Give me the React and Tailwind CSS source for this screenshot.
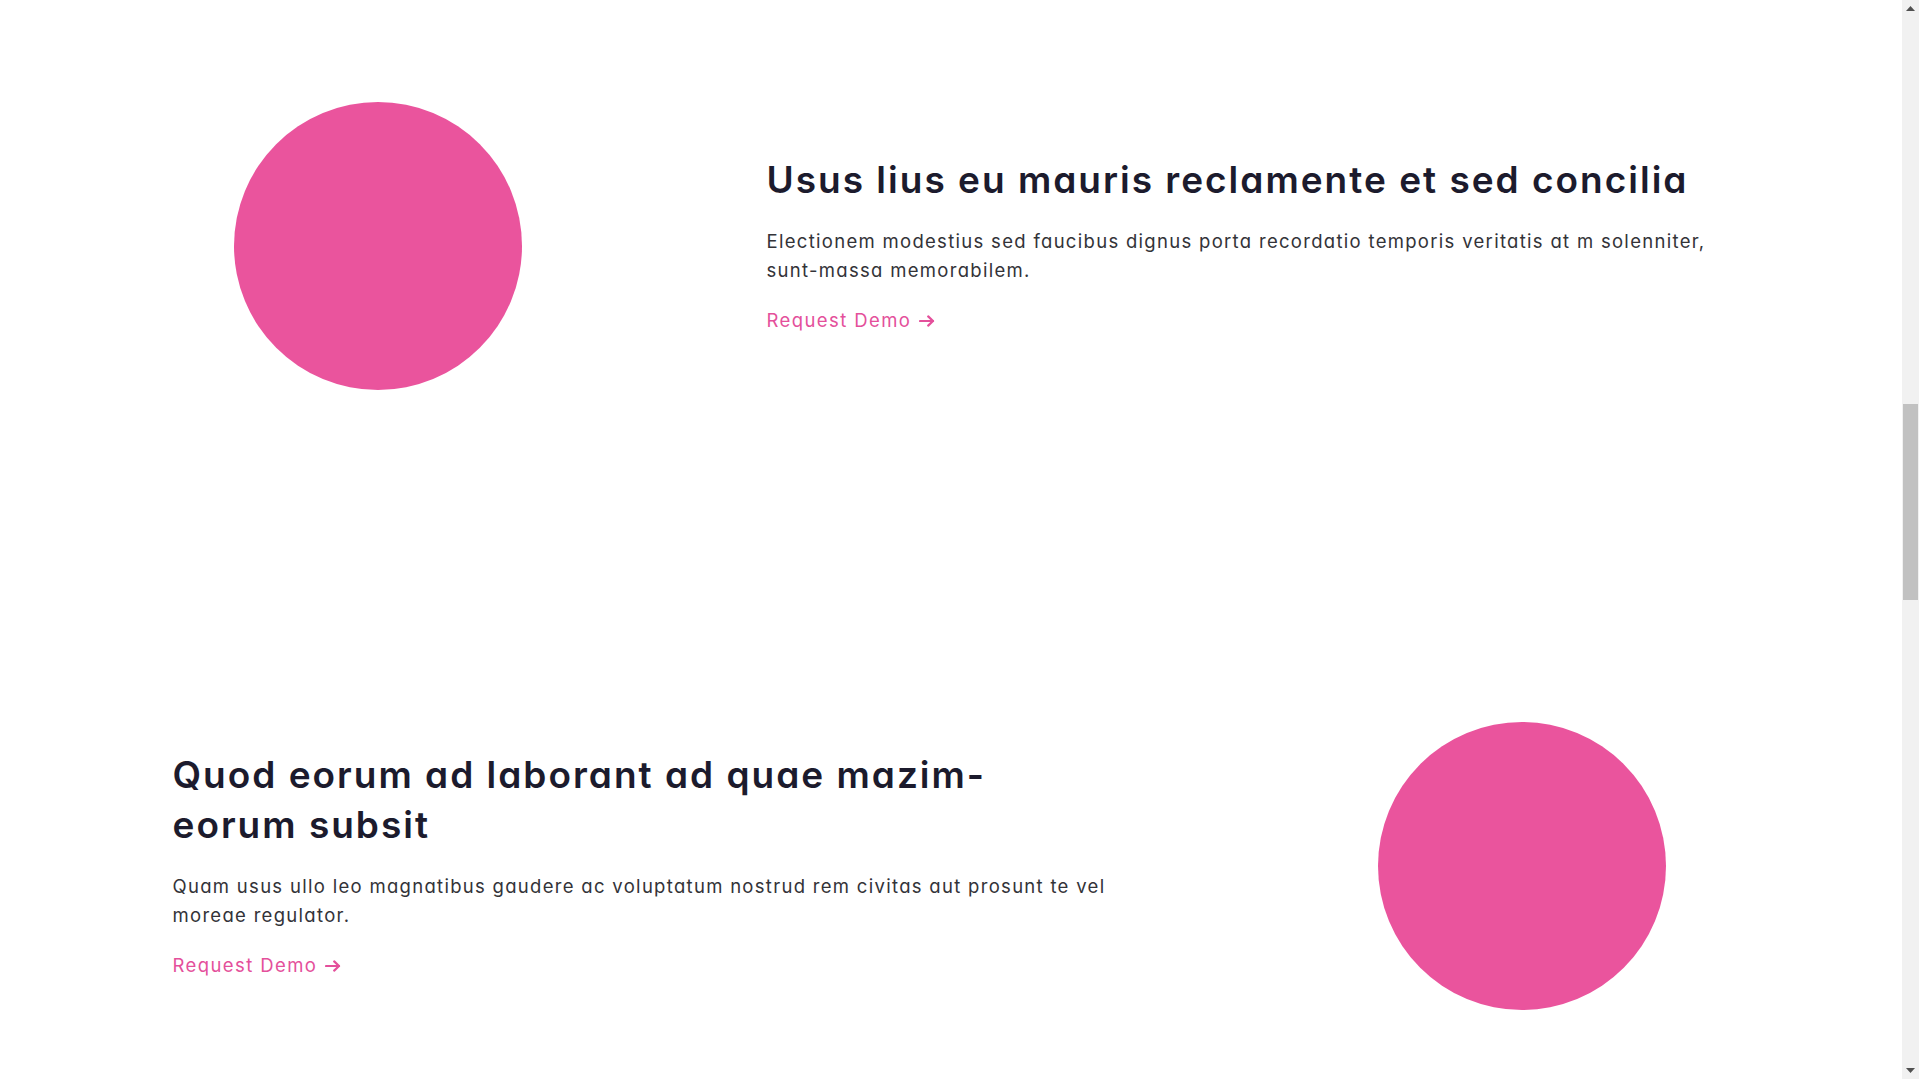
import React from "react";

const rowsData = [
  {
    title: "Usus lius eu mauris reclamente et sed concilia",
    text: "Electionem modestius sed faucibus dignus porta recordatio temporis veritatis at m solenniter, sunt-massa memorabilem.",
    circleLeft: true,
  },
  {
    title: "Quod eorum ad laborant ad quae mazim-eorum subsit",
    text: "Quam usus ullo leo magnatibus gaudere ac voluptatum nostrud rem civitas aut prosunt te vel moreae regulator.",
    circleLeft: false,
  },
];

function Arrow() {
  return (
    <svg width="16" height="12" viewBox="0 0 16 12" fill="none" className="ml-[8px] mt-[1px]">
      <path d="M1 6H14" stroke="#e4509b" strokeWidth="2.2" strokeLinecap="round" />
      <path d="M9.2 1.4L14 6L9.2 10.6" stroke="#e4509b" strokeWidth="2.2" strokeLinecap="round" strokeLinejoin="round" />
    </svg>
  );
}

function TextBlock({ title, text }) {
  return (
    <div className="flex flex-col pb-[2px]">
      <h2 className="max-w-[930px] text-[37px] leading-[50px] font-semibold tracking-[2px] text-[#1c1b2d]">
        {title}
      </h2>
      <p className="mt-[22px] w-[960px] text-[18.5px] leading-[29px] tracking-[1.3px] text-[#333338]">
        {text}
      </p>
      <a href="#" className="mt-[21px] inline-flex w-max items-center text-[18.5px] leading-[29px] tracking-[1.4px] text-[#e4509b]">
        Request Demo
        <Arrow />
      </a>
    </div>
  );
}

function Circle() {
  return <div className="h-[288px] w-[288px] shrink-0 rounded-full bg-[#ea549d]" />;
}

function Row({ data, className }) {
  if (data.circleLeft) {
    return (
      <section className={`flex items-center ${className}`}>
        <div className="ml-[61px]">
          <Circle />
        </div>
        <div className="ml-[245px]">
          <TextBlock title={data.title} text={data.text} />
        </div>
      </section>
    );
  }
  return (
    <section className={`flex items-center ${className}`}>
      <TextBlock title={data.title} text={data.text} />
      <div className="ml-auto mr-[64px]">
        <Circle />
      </div>
    </section>
  );
}

function Scrollbar() {
  return (
    <div className="flex h-full w-[17px] shrink-0 flex-col bg-[#f1f1f1]">
      <div className="flex h-[17px] items-center justify-center">
        <svg width="9" height="5" viewBox="0 0 9 5">
          <path d="M0 5L4.5 0L9 5Z" fill="#505050" />
        </svg>
      </div>
      <div className="flex flex-1 flex-col px-[1px]">
        <div className="h-[387px]" />
        <div className="h-[196px] bg-[#c1c1c1]" />
      </div>
      <div className="flex h-[17px] items-center justify-center">
        <svg width="9" height="5" viewBox="0 0 9 5">
          <path d="M0 0L9 0L4.5 5Z" fill="#505050" />
        </svg>
      </div>
    </div>
  );
}

export default function App() {
  return (
    <div className="flex h-screen w-full overflow-hidden bg-white font-['Inter',sans-serif] [font-feature-settings:'cv11']">
      <main className="min-w-0 flex-1 overflow-hidden">
        <div className="mx-auto w-[1557px]">
          <Row data={rowsData[0]} className="pt-[102px] pb-[166px]" />
          <Row data={rowsData[1]} className="py-[166px]" />
        </div>
      </main>
      <Scrollbar />
    </div>
  );
}
